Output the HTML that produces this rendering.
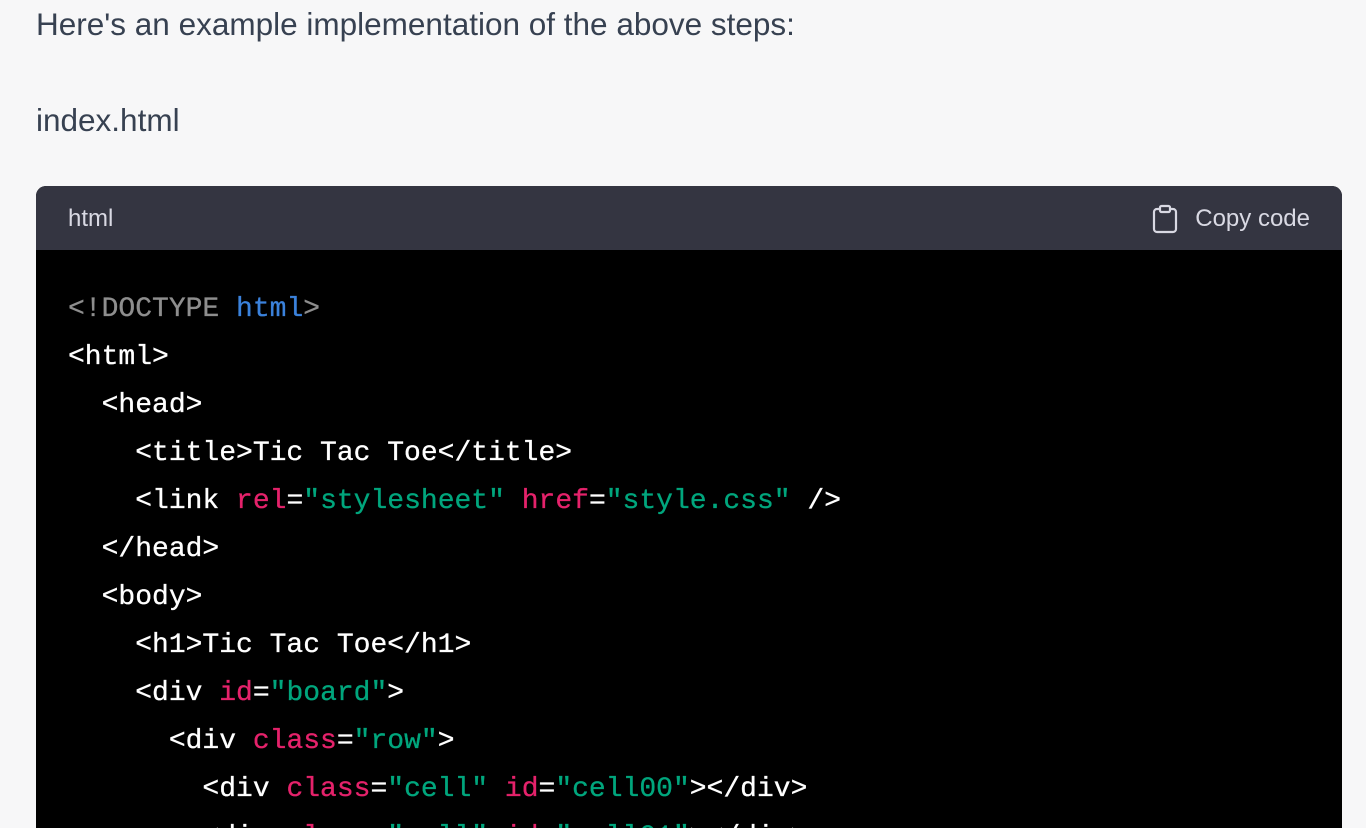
<!DOCTYPE html>
<html style="height:828px;overflow:hidden"><head><style>
body{margin:0;width:1366px;height:828px;overflow:hidden;background:#f7f7f8;font-family:"Liberation Sans",sans-serif;color:#374151;position:relative}
.p{position:absolute;left:36px;font-size:31.5px;line-height:40px}
.blk{position:absolute;left:36px;top:186px;width:1306px;height:642px;border-radius:10px 10px 0 0;overflow:hidden;background:#000}
.hd{height:64px;background:#343541;color:#d9d9e3;font-size:24px;position:relative}
.hd .l{position:absolute;left:32px;top:19px}
.hd .r{position:absolute;right:32px;top:19px}
.hd svg{position:absolute;right:164px;top:18px}
pre{margin:0;position:absolute;left:32px;top:100px;font-family:"Liberation Mono","DejaVu Sans Mono",monospace;font-size:28px;line-height:48px;color:#fff;-webkit-text-stroke:0.3px currentColor}
.g{color:#8e8e8e}.b{color:#3b82dc}.r{color:#e5226b}.s{color:#00a67d}
</style></head><body>
<div class="p" style="top:4px">Here's an example implementation of the above steps:</div>
<div class="p" style="top:100px">index.html</div>
<div class="blk">
<div class="hd"><span class="l">html</span>
<svg width="26" height="30" viewBox="0 0 26 30" fill="none" stroke="#d9d9e3" stroke-width="2.2" stroke-linejoin="round"><rect x="2" y="5" width="22" height="23" rx="3"/><rect x="8" y="2" width="10" height="6" rx="1.5" fill="#343541"/></svg>
<span class="r" style="color:#d9d9e3">Copy code</span></div>
<pre><span class="g">&lt;!DOCTYPE </span><span class="b">html</span><span class="g">&gt;</span>
&lt;html&gt;
  &lt;head&gt;
    &lt;title&gt;Tic Tac Toe&lt;/title&gt;
    &lt;link <span class="r">rel</span>=<span class="s">"stylesheet"</span> <span class="r">href</span>=<span class="s">"style.css"</span> /&gt;
  &lt;/head&gt;
  &lt;body&gt;
    &lt;h1&gt;Tic Tac Toe&lt;/h1&gt;
    &lt;div <span class="r">id</span>=<span class="s">"board"</span>&gt;
      &lt;div <span class="r">class</span>=<span class="s">"row"</span>&gt;
        &lt;div <span class="r">class</span>=<span class="s">"cell"</span> <span class="r">id</span>=<span class="s">"cell00"</span>&gt;&lt;/div&gt;
        &lt;div <span class="r">class</span>=<span class="s">"cell"</span> <span class="r">id</span>=<span class="s">"cell01"</span>&gt;&lt;/div&gt;</pre>
</div>
</body></html>
